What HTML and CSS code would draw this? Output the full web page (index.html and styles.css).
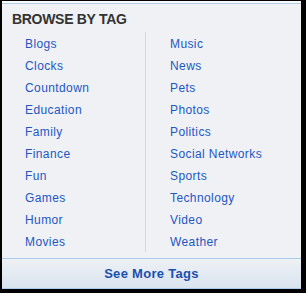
FILE: index.html
```html
<!DOCTYPE html>
<html>
<head>
<meta charset="utf-8">
<link rel="stylesheet" href="styles.css">
</head>
<body>
<div class="panel">
  <div class="panel-inner">
    <h2 class="title">BROWSE BY TAG</h2>
    <div class="tags">
      <ul class="col col-left">
        <li><a href="#">Blogs</a></li>
        <li><a href="#">Clocks</a></li>
        <li><a href="#">Countdown</a></li>
        <li><a href="#">Education</a></li>
        <li><a href="#">Family</a></li>
        <li><a href="#">Finance</a></li>
        <li><a href="#">Fun</a></li>
        <li><a href="#">Games</a></li>
        <li><a href="#">Humor</a></li>
        <li><a href="#">Movies</a></li>
      </ul>
      <ul class="col col-right">
        <li><a href="#">Music</a></li>
        <li><a href="#">News</a></li>
        <li><a href="#">Pets</a></li>
        <li><a href="#">Photos</a></li>
        <li><a href="#">Politics</a></li>
        <li><a href="#">Social Networks</a></li>
        <li><a href="#">Sports</a></li>
        <li><a href="#">Technology</a></li>
        <li><a href="#">Video</a></li>
        <li><a href="#">Weather</a></li>
      </ul>
    </div>
    <a class="more" href="#">See More Tags</a>
  </div>
</div>
</body>
</html>
```
FILE: styles.css
```css
html, body {
  margin: 0;
  padding: 0;
  background: #000;
  height: 293px;
  overflow: hidden;
}
.panel {
  margin: 1px 5px 0 2px;
  background: #eff1f4;
  border-top: 2px solid #f8f9fb;
}
.panel-inner {
  border-top: 1px solid #b1cdea;
  padding-top: 7px;
}
.title {
  margin: 0 0 0 10px;
  font-family: "Liberation Sans", Arial, sans-serif;
  font-weight: bold;
  font-size: 14px;
  line-height: 16px;
  letter-spacing: -0.3px;
  color: #333333;
}
.tags {
  display: grid;
  grid-template-columns: 143px 1fr;
  margin-top: 5px;
}
.col {
  list-style: none;
  margin: 0;
  padding: 0;
}
.col-left {
  padding-left: 23px;
}
.col-right {
  border-left: 1px solid #d4d8dd;
  padding-left: 24px;
}
.col li {
  height: 22px;
  line-height: 22px;
}
.col a {
  font-family: "Liberation Sans", Arial, sans-serif;
  font-size: 12px;
  letter-spacing: 0.4px;
  color: #1d57c4;
  text-decoration: none;
}
.more {
  display: block;
  margin-top: 6px;
  border-top: 1px solid #a9cbec;
  border-bottom: 1px solid #a9cbec;
  height: 29px;
  line-height: 29px;
  text-align: center;
  background: linear-gradient(#eef1f5, #d9e4ef);
  font-family: "Liberation Sans", Arial, sans-serif;
  font-weight: bold;
  font-size: 13px;
  letter-spacing: 0.3px;
  color: #1a50ae;
  text-decoration: none;
}
```
